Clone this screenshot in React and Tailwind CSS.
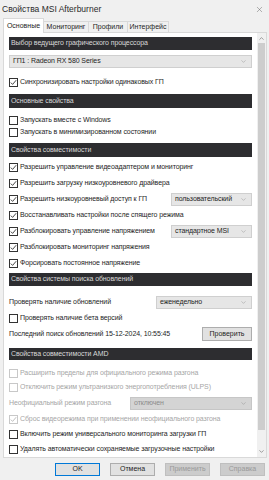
import { ChevronDown, ChevronUp, X } from 'lucide-react'

const font = { fontFamily: '"Liberation Sans", Arial, sans-serif' }

function Check({ checked, disabled }) {
  return (
    <span
      className={`w-[9px] h-[9px] flex-shrink-0 border bg-white flex items-center justify-center ${
        disabled ? 'border-[#c8c8c8]' : 'border-[#333]'
      }`}
    >
      {checked && (
        <svg width="7" height="7" viewBox="0 0 7 7" fill="none">
          <path
            d="M0.8 3.6L2.6 5.4L6.2 1.2"
            stroke={disabled ? '#b8b8b8' : '#333'}
            strokeWidth="0.9"
          />
        </svg>
      )}
    </span>
  )
}

function Row({ checked, disabled, label, className = '', children }) {
  return (
    <div className={`flex items-center ${className}`}>
      <Check checked={checked} disabled={disabled} />
      <span className={`ml-[2px] text-[7px] tracking-[-0.1px] whitespace-nowrap ${disabled ? 'text-[#a6a6a6]' : 'text-[#1e1e1e]'}`}>
        {label}
      </span>
      {children}
    </div>
  )
}

function Header({ children, className = '' }) {
  return (
    <div className={`bg-[#2d2d30] text-[#d8d8d8] text-[7px] tracking-[-0.1px] flex items-center pl-[2px] ${className}`}>
      {children}
    </div>
  )
}

function Select({ value, className = '', disabled }) {
  return (
    <div
      className={`h-[13px] border flex items-center justify-between pl-[3px] pr-[4px] text-[7px] tracking-[-0.1px] ${
        disabled
          ? 'bg-[#d4d4d4] border-[#c6c6c6] text-[#8c8c8c]'
          : 'bg-[#e6e6e6] border-[#cfcfcf] text-[#1e1e1e]'
      } ${className}`}
    >
      <span className="whitespace-nowrap">{value}</span>
      <ChevronDown size={7} strokeWidth={1.5} color="#8a8a8a" />
    </div>
  )
}

function Label({ children, disabled }) {
  return (
    <span className={`text-[7px] tracking-[-0.1px] whitespace-nowrap ${disabled ? 'text-[#a6a6a6]' : 'text-[#1e1e1e]'}`}>
      {children}
    </span>
  )
}

export default function App() {
  return (
    <div className="w-[269px] h-[480px] bg-[#f0f0f0] overflow-hidden relative" style={font}>
      {/* Title */}
      <div className="h-[18px] flex items-center justify-between pl-[2px] pr-[5px]">
        <span className="text-[8.5px] text-[#2a2a2a]">Свойства MSI Afterburner</span>
        <X size={9} strokeWidth={1} color="#444" />
      </div>

      {/* Tabs */}
      <div className="ml-[3px] h-[14px] flex items-end relative z-10">
        <div className="h-[15px] w-[41px] bg-white border border-b-0 border-[#d9d9d9] text-[7px] text-[#1e1e1e] flex items-center justify-center -mb-[1px]">
          Основные
        </div>
        <div className="h-[11px] w-[45px] border border-l-0 border-b-0 border-[#d9d9d9] text-[7px] text-[#1e1e1e] flex items-center justify-center">
          Мониторинг
        </div>
        <div className="h-[11px] w-[39px] border border-l-0 border-b-0 border-[#d9d9d9] text-[7px] text-[#1e1e1e] flex items-center justify-center">
          Профили
        </div>
        <div className="h-[11px] w-[41px] border border-l-0 border-b-0 border-[#d9d9d9] text-[7px] text-[#1e1e1e] flex items-center justify-center">
          Интерфейс
        </div>
      </div>

      {/* Panel */}
      <div className="ml-[3px] w-[264px] h-[426px] bg-white border border-[#d9d9d9] flex">
        <div className="w-[253px] px-[5px] pt-[4px] flex flex-col">
          <Header className="h-[13px]">Выбор ведущего графического процессора</Header>
          <Select value="ГП1 : Radeon RX 580 Series" className="mt-[5px] h-[12px]" />
          <Row checked label="Синхронизировать настройки одинаковых ГП" className="mt-[7px] h-[14px]" />

          <Header className="mt-[5px] h-[14px]">Основные свойства</Header>
          <Row label="Запускать вместе с Windows" className="mt-[6px] h-[12px]" />
          <Row label="Запускать в минимизированном состоянии" className="h-[12px]" />

          <Header className="mt-[5px] h-[14px]">Свойства совместимости</Header>
          <div className="mt-[2px] flex flex-col">
            <Row checked label="Разрешить управление видеоадаптером и мониторинг" className="h-[16px]" />
            <Row checked label="Разрешить загрузку низкоуровневого драйвера" className="h-[16px]" />
            <Row checked label="Разрешить низкоуровневый доступ к ГП" className="h-[16px]">
              <Select value="пользовательский" className="ml-auto w-[81px]" />
            </Row>
            <Row checked label="Восстанавливать настройки после спящего режима" className="h-[16px]" />
            <Row checked label="Разблокировать управление напряжением" className="h-[16px]">
              <Select value="стандартное MSI" className="ml-auto w-[81px]" />
            </Row>
            <Row checked label="Разблокировать мониторинг напряжения" className="h-[16px]" />
            <Row checked label="Форсировать постоянное напряжение" className="h-[16px]" />
          </div>

          <Header className="mt-[2px] h-[13px]">Свойства системы поиска обновлений</Header>
          <div className="mt-[9px] h-[14px] flex items-center">
            <Label>Проверять наличие обновлений</Label>
            <Select value="еженедельно" className="ml-auto w-[96px]" />
          </div>
          <Row label="Проверять наличие бета версий" className="mt-[2px] h-[14px]" />
          <div className="mt-[2px] h-[14px] flex items-center">
            <Label>Последний поиск обновлений 15-12-2024, 10:55:45</Label>
            <button className="ml-auto w-[50px] h-[14px] bg-[#e1e1e1] border border-[#adadad] text-[7px] text-[#1e1e1e]">
              Проверить
            </button>
          </div>

          <Header className="mt-[7px] h-[12px]">Свойства совместимости AMD</Header>
          <Row disabled label="Расширить пределы для официального режима разгона" className="mt-[6px] h-[14px]" />
          <Row disabled label="Отключить режим ультранизкого энергопотребления (ULPS)" className="h-[14px]" />
          <div className="mt-[2px] h-[14px] flex items-center">
            <Label disabled>Неофициальный режим разгона</Label>
            <Select disabled value="отключен" className="ml-auto w-[122px]" />
          </div>
          <Row checked disabled label="Сброс видеорежима при применении неофициального разгона" className="mt-[2px] h-[15px]" />
          <Row label="Включить режим универсального мониторинга загрузки ГП" className="h-[15px]" />
          <Row label="Удалять автоматически сохраняемые загрузочные настройки" className="h-[14px]" />
        </div>

        {/* Scrollbar */}
        <div className="w-[9px] bg-[#f0f0f0] flex flex-col items-center">
          <div className="h-[10px] flex items-center justify-center">
            <ChevronUp size={7} strokeWidth={2} color="#606060" />
          </div>
          <div className="w-[7px] h-[387px] bg-[#cdcdcd]" />
          <div className="flex-1" />
          <div className="h-[10px] mb-[1px] flex items-center justify-center">
            <ChevronDown size={7} strokeWidth={2} color="#606060" />
          </div>
        </div>
      </div>

      {/* Buttons */}
      <div className="mt-[5px] flex justify-end gap-[10px] pr-[4px]">
        <button className="w-[45px] h-[13px] bg-[#e1e1e1] border border-[#0078d7] text-[7px] text-[#1e1e1e]">OK</button>
        <button className="w-[45px] h-[13px] bg-[#e1e1e1] border border-[#adadad] text-[7px] text-[#1e1e1e]">Отмена</button>
        <button className="w-[45px] h-[13px] bg-[#cccccc] border border-[#bfbfbf] text-[7px] text-[#9a9a9a]">Применить</button>
        <button className="w-[45px] h-[13px] bg-[#cccccc] border border-[#bfbfbf] text-[7px] text-[#9a9a9a]">Справка</button>
      </div>
    </div>
  )
}
